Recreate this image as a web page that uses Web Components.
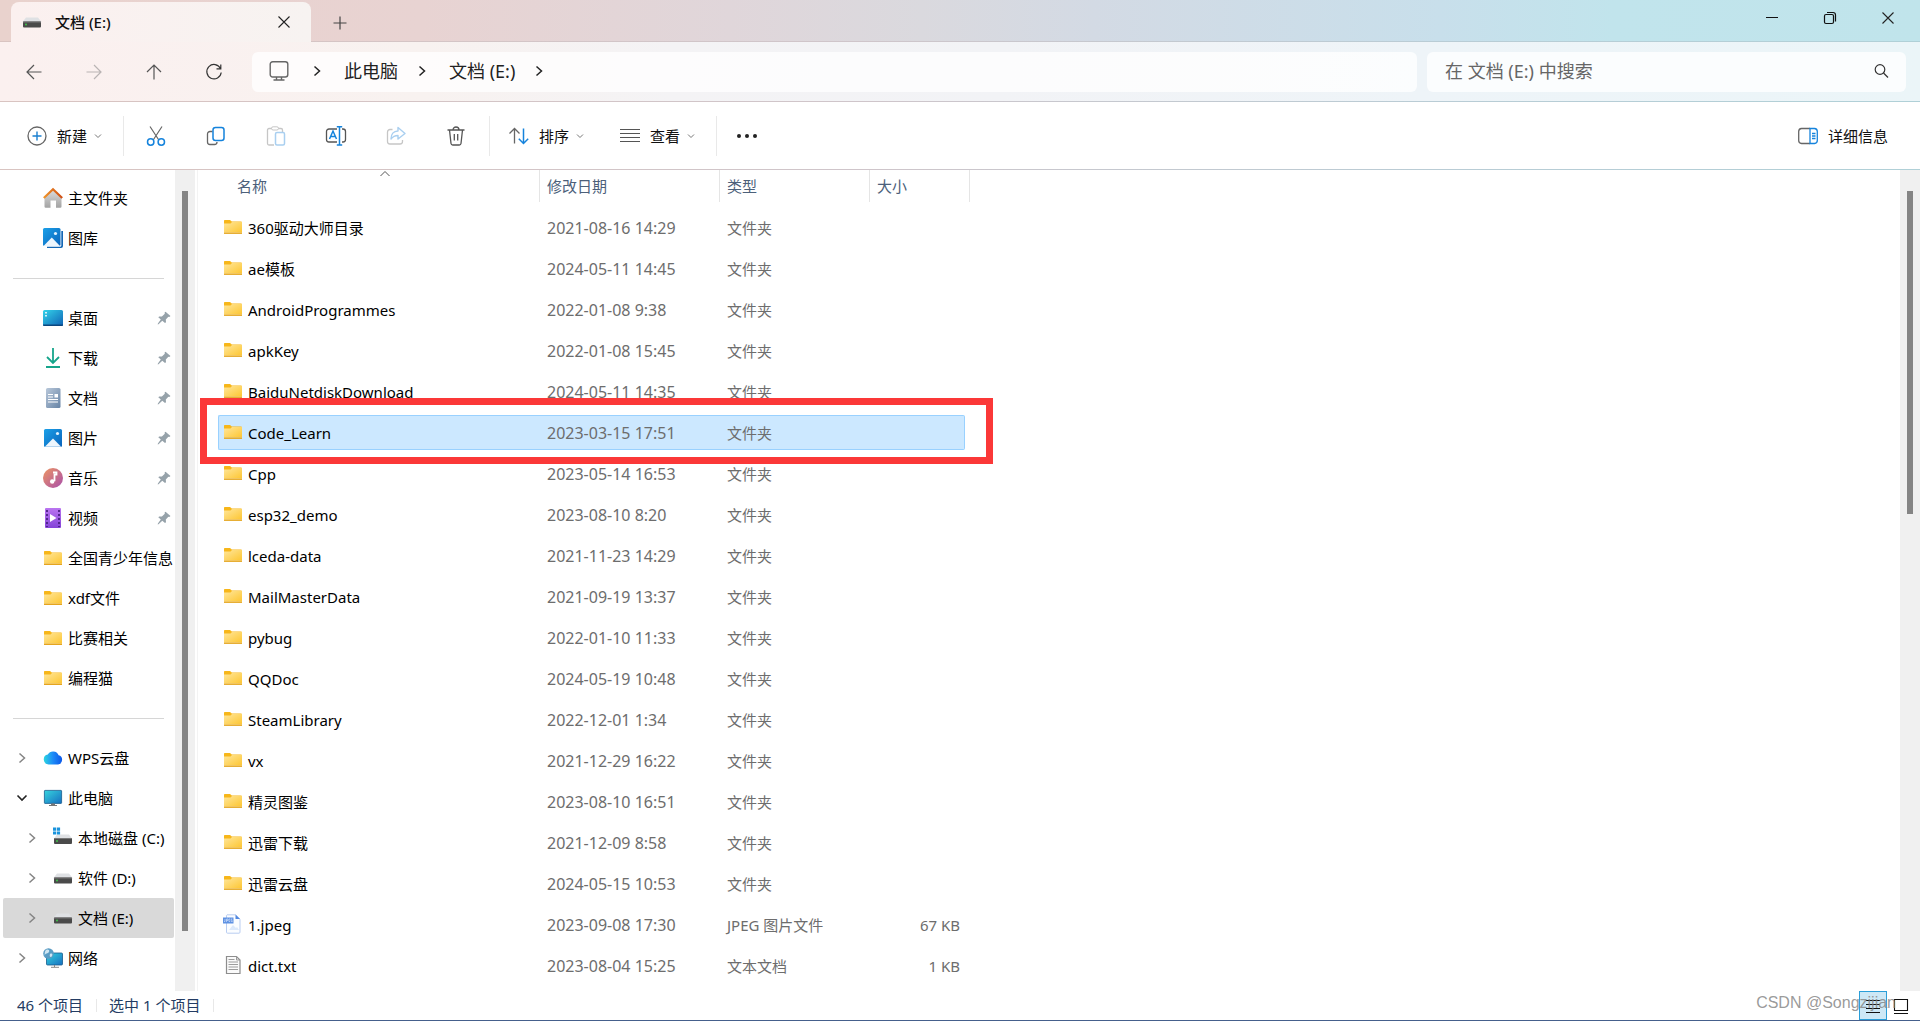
<!DOCTYPE html>
<html lang="zh-CN">
<head>
<meta charset="utf-8">
<title>文档 (E:)</title>
<style>
html,body{height:100%;margin:0}
body{font:15px/20px "Noto Sans","Noto Sans CJK SC",sans-serif;color:#111;background:#fff;overflow:hidden}
</style>
</head>
<body>
<explorer-window></explorer-window>
<script>
const ICONS={
drive:[20,20,'<path d="M4 5.500h12l3.500 4.500H.5z" fill="#dfe1e4"/><rect x="1" y="9.500" width="18" height="6" rx="1" fill="#4a4a4a"/><rect x="1" y="9.500" width="18" height="1" fill="#777"/><circle cx="4" cy="12.500" r=".9" fill="#3fd04a"/>'],
cdrive:[20,20,'<path d="M4 6.500h12l3 4H1z" fill="#dfe1e4"/><rect x="1" y="10" width="18" height="6" rx="1" fill="#4a4a4a"/><rect x="1" y="10" width="18" height="1" fill="#777"/><circle cx="4" cy="13" r=".9" fill="#3fd04a"/><g fill="#1a93dc"><path d="M0-.5h3.200v3.200H0zM3.900-.5h3.200v3.200H3.900zM0 3.400h3.200v3.200H0zM3.900 3.400h3.200v3.200H3.900z"/></g>'],
close:[14,14,'<path d="M1.500 1.500l11 11M12.500 1.500l-11 11" stroke="#222" stroke-width="1.100"/>'],
plus:[14,14,'<path d="M7 .5v13M.5 7h13" stroke="#444" stroke-width="1.200"/>'],
min:[14,14,'<path d="M1 6.500h12" stroke="#111"/>'],
restore:[14,14,'<rect x="1.500" y="3.500" width="9" height="9" rx="1.500"/><path d="M4 1.500h6a2.500 2.500 0 0 1 2.500 2.500v6.500" />','fill="none" stroke="#111" stroke-width="1.200"'],
back:[16,16,'<path d="M15.500 8H1M8 1L1 8l7 7"/>','fill="none" stroke="#555" stroke-width="1.200"'],
fwd:[16,16,'<path d="M.5 8H15M8 1l7 7-7 7"/>','fill="none" stroke="#b9b4b4" stroke-width="1.200"'],
up:[16,16,'<path d="M8 15.500V1M1 8l7-7 7 7"/>','fill="none" stroke="#555" stroke-width="1.200"'],
refresh:[16,16,'<path d="M14.500 4.500A7.200 7.200 0 1 0 15.200 8.500M14.800.5v4.300h-4.300"/>','fill="none" stroke="#333" stroke-width="1.200"'],
monitor:[20,20,'<rect x="1.200" y=".8" width="17.600" height="15.200" rx="2.500"/><path d="M7.500 16v2.800M12.500 16v2.800M4.500 19h11"/>','fill="none" stroke="#666" stroke-width="1.400"'],
chev:[12,12,'<path d="M3.500 1.500L8.500 6l-5 4.500"/>','fill="none" stroke="#222" stroke-width="1.500"'],
tree:[12,12,'<path d="M3.500 1.500L8.500 6l-5 4.500"/>','fill="none" stroke="#858585" stroke-width="1.500"'],
open:[12,12,'<path d="M1.500 3.500L6 8l4.500-4.500"/>','fill="none" stroke="#222" stroke-width="1.600"'],
down:[8,8,'<path d="M1 2.500l3 3 3-3"/>','fill="none" stroke="#777"'],
sort:[12,8,'<path d="M1.500 6L6 1.500 10.500 6"/>','fill="none" stroke="#555"'],
search:[16,16,'<circle cx="7" cy="6.500" r="4.800"/><path d="M10.500 10l4.500 4.500"/>','fill="none" stroke="#333" stroke-width="1.200"'],
new:[20,20,'<circle cx="10" cy="10" r="9" fill="none" stroke="#666" stroke-width="1.300"/><path d="M10 5.500v9M5.500 10h9" stroke="#1a7fd0" stroke-width="1.400"/>'],
cut:[20,20,'<path d="M4 .5l8.800 13.500M16 .5L7.200 14" stroke="#666" stroke-width="1.200"/><g fill="none" stroke="#1583dc" stroke-width="1.500"><circle cx="4.700" cy="16" r="3.200"/><circle cx="15.300" cy="16" r="3.200"/></g>'],
copy:[20,20,'<path d="M6.500 5.500H4a2.500 2.500 0 0 0-2.500 2.500v8A2.500 2.500 0 0 0 4 18.500h4.500a2.500 2.500 0 0 0 2.500-2.500" stroke="#666" stroke-width="1.300"/><rect x="7" y="1.500" width="11" height="13" rx="2.500" stroke="#1583dc" stroke-width="1.500"/>','fill="none"'],
paste:[20,20,'<path d="M5.500 2.500H3A1.500 1.500 0 0 0 1.500 4v13.500A1.500 1.500 0 0 0 3 19h5M12.500 2.500H15A1.500 1.500 0 0 1 16.500 4v2" stroke="#c6c6c6" stroke-width="1.300"/><rect x="5.500" y=".8" width="7" height="3.200" rx="1.600" stroke="#c6c6c6"/><rect x="9.500" y="6.500" width="9" height="12.500" rx="1.500" stroke="#a9cff0" stroke-width="1.500"/>','fill="none"'],
rename:[20,20,'<path d="M11 3H3a2.500 2.500 0 0 0-2.500 2.500v8A2.500 2.500 0 0 0 3 16h8M16 3h1a2.500 2.500 0 0 1 2.500 2.500v8A2.500 2.500 0 0 1 17 16h-1" stroke="#555" stroke-width="1.300"/><path d="M3.500 13L7 5l3.500 8M4.700 10.500h4.600" stroke="#1583dc" stroke-width="1.500"/><path d="M13.500.5v18.500M10.800.7h5.400M10.800 19h5.400" stroke="#1583dc" stroke-width="1.500"/>','fill="none"'],
share:[20,20,'<path d="M6.500 3.500H4A2.500 2.500 0 0 0 1.500 6v9.500A2.500 2.500 0 0 0 4 18h10a2.500 2.500 0 0 0 2.500-2.500V14" stroke="#c6c6c6" stroke-width="1.300"/><path d="M12 1.500l7 6-7 5.500V9.500c-3 0-5 .8-7 3.500 0-4.500 2.500-8 7-8z" stroke="#a9cff0" stroke-width="1.400" stroke-linejoin="round"/>','fill="none"'],
trash:[20,20,'<path d="M1.500 4h17M7 4c0-4 6-4 6 0M3.500 4l1.500 13.500a1.800 1.800 0 0 0 1.800 1.500h6.400a1.800 1.800 0 0 0 1.800-1.500L16.500 4M8.300 8v6.500M11.700 8v6.500" stroke="#555" stroke-width="1.300"/>','fill="none"'],
order:[20,20,'<path d="M5.500 17.500V2.500M.5 7.500l5-5 5 5" stroke="#666" stroke-width="1.300"/><path d="M14.500 2.500v15M9.800 12.800l4.700 4.700 4.700-4.700" stroke="#1583dc" stroke-width="1.500"/>','fill="none"'],
view:[20,20,'<path d="M0 3.500h20M0 7.500h20M0 11.500h20M0 15.500h20" stroke="#555" stroke-width="1.200"/>'],
more:[20,20,'<g fill="#222"><circle cx="2" cy="10" r="2"/><circle cx="10" cy="10" r="2"/><circle cx="18" cy="10" r="2"/></g>'],
details:[20,20,'<path d="M12 2.500H3.500A3 3 0 0 0 .7 5.500v9a3 3 0 0 0 2.800 3H12" stroke="#666" stroke-width="1.300"/><path d="M12 2.500h4.500a3 3 0 0 1 2.800 3v9a3 3 0 0 1-2.800 3H12zM14 7.500h3.500M14 10h3.500M14 12.500h3.500" stroke="#1583dc" stroke-width="1.300"/>','fill="none"'],
home:[20,20,'<defs><linearGradient id="a" x2="0" y2="1"><stop stop-color="#dedede"/><stop offset="1" stop-color="#a3a3a3"/></linearGradient><linearGradient id="b"><stop stop-color="#f0952a"/><stop offset="1" stop-color="#cf4e14"/></linearGradient></defs><path d="M1.500 9L10 1.500 18.500 9v9.500a1.200 1.200 0 0 1-1.200 1.200H13V12.500H7.500v7.200H2.700a1.200 1.200 0 0 1-1.200-1.200z" fill="url(#a)"/><path d="M.8 10L10 1.200 19.200 10" fill="none" stroke="url(#b)" stroke-width="2.200"/>'],
gallery:[20,20,'<defs><linearGradient id="a" x2="1" y2="1"><stop stop-color="#1ba0e8"/><stop offset="1" stop-color="#0a63bb"/></linearGradient></defs><path d="M4 3h16v15a2 2 0 0 1-2 2H4z" fill="#1467b5"/><rect x="0" y="0" width="18.300" height="18.800" rx="1.500" fill="#fff"/><rect width="17.500" height="18" rx="1.500" fill="url(#a)"/><path d="M.5 18L8.800 9.500l8.200 8.500z" fill="#eef6fd"/><circle cx="12.500" cy="5.500" r="1.600" fill="#e3f3ff"/>'],
desktop:[20,20,'<defs><linearGradient id="a" x2="1" y2="1"><stop stop-color="#34d4ea"/><stop offset="1" stop-color="#0f62b5"/></linearGradient></defs><rect y="2" width="20" height="16" rx="1.500" fill="url(#a)"/><path d="M0 16.500h20v.5a1 1 0 0 1-1 1H1a1 1 0 0 1-1-1z" fill="#0c477f"/><path d="M2.200 4h1.600v1.600H2.200zM2.200 7h1.600v1.600H2.200z" fill="#fff"/>'],
download:[20,20,'<path d="M10 0v14.500M4 9l6 6 6-6M3 19h14" fill="none" stroke="#16a58b" stroke-width="1.800"/>'],
doc:[20,20,'<defs><linearGradient id="a" x2="1" y2="1"><stop stop-color="#b9c8da"/><stop offset="1" stop-color="#6683a5"/></linearGradient></defs><rect x="3" width="14.500" height="20" rx="1.500" fill="url(#a)"/><path d="M5 6.500h5M5 9h5M5 11.500h10M5 14h10" stroke="#fff" stroke-width="1.200"/><path d="M11.500 6h3.500v3.500h-3.500z" fill="#fff"/>'],
picture:[20,20,'<defs><linearGradient id="a" x2="1" y2="1"><stop stop-color="#1ba0e8"/><stop offset="1" stop-color="#0a63bb"/></linearGradient></defs><rect x="1" y="1" width="18" height="18" rx="1.500" fill="url(#a)"/><path d="M1.800 18.800L10 10.500l8.200 8.300z" fill="#eef6fd"/><circle cx="14.500" cy="5.500" r="1.600" fill="#e3f3ff"/>'],
music:[20,20,'<defs><linearGradient id="a" x2="1" y2="1"><stop stop-color="#ed9562"/><stop offset="1" stop-color="#a94fab"/></linearGradient></defs><circle cx="10" cy="10" r="10" fill="url(#a)"/><path d="M10 4.500h3.500v2.200h-2v6.500" fill="none" stroke="#fff" stroke-width="1.800"/><circle cx="9.200" cy="13.500" r="2.200" fill="#fff"/>'],
video:[20,20,'<defs><linearGradient id="a" x2="0" y2="1"><stop stop-color="#ba75f0"/><stop offset="1" stop-color="#8444d8"/></linearGradient></defs><rect x="2" width="16" height="20" rx="1" fill="url(#a)"/><path d="M4 2v17M16 2v17" stroke="#4b2284" stroke-width="1.800" stroke-dasharray="2 2"/><path d="M7 6l6.500 4L7 14z" fill="#fff"/>'],
folder:[20,20,'<defs><linearGradient id="a" x2="1" y2="1"><stop stop-color="#ffe69b"/><stop offset="1" stop-color="#fdc632"/></linearGradient></defs><path d="M1 3.500A.8.8 0 0 1 1.800 3H7l1.800 1.500H18a1 1 0 0 1 1 1V8H1z" fill="#f7b619"/><path d="M1 6.500h6.500L9 5h10v10.500H1z" fill="url(#a)"/><path d="M1 16.200h18" stroke="#e5a51e" stroke-width="1.400"/>'],
cloud:[20,20,'<defs><linearGradient id="a"><stop stop-color="#2bd5e0"/><stop offset=".5" stop-color="#1d8bf7"/><stop offset="1" stop-color="#0b57e8"/></linearGradient></defs><path d="M5.500 16.500a5 5 0 0 1-.7-9.900 6 6 0 0 1 10.800.7 4.700 4.700 0 0 1-.5 9.200z" fill="url(#a)"/>'],
pc:[20,20,'<defs><linearGradient id="a" x2="1" y2="1"><stop stop-color="#35d4de"/><stop offset="1" stop-color="#176fc1"/></linearGradient></defs><rect x="1.400" y="2.400" width="17.200" height="13" rx=".6" fill="url(#a)" stroke="#175c8d" stroke-width=".8"/><path d="M8.500 16h3v1.500h-3zM6 17.500h8" fill="#777" stroke="#777"/>'],
network:[20,20,'<defs><linearGradient id="a" x2="1" y2="1"><stop stop-color="#35d4de"/><stop offset="1" stop-color="#176fc1"/></linearGradient></defs><rect x="3.500" y="5" width="16" height="12" rx="1" fill="url(#a)" stroke="#175c8d" stroke-width=".8"/><path d="M11.500 17v2M8 19.300h8" stroke="#888"/><circle cx="5.500" cy="5.500" r="5.300" fill="#5a9cc4"/><path d="M3 2c2-1 4 0 3 2S2 5 2 7 1 4 3 2M7 6c2-1 3 0 2 2s-3 1-2-2" fill="#cfe6f2"/>'],
pin:[14,14,'<path d="M8.500.8l5 4.300-1.200.8-.9-.1L8.800 8.500l.2 2.800-1 .8-2.700-2.300L1.500 13.300l-.8.200.2-.9L3.800 8.500 1.300 6.300l.9-.9 2.700 0L7.800 2.700 7.600 1.600z" fill="#96a2aa"/>'],
jpeg:[20,20,'<path d="M4 .8h8.500L17 5.200v13a1 1 0 0 1-1 1H4.500a1 1 0 0 1-1-1V1.300z" fill="#fbfdff" stroke="#b9cdf1"/><path d="M12.500.5L17 5h-4.500z" fill="#5489e0"/><path d="M6 16l4-5 3 3 1-1 2 3z" fill="#dce9fb"/><rect x="0" y="3.500" width="10.500" height="6" fill="#5f92e3"/><path d="M2 5v2.500h-1M3.500 8V5h1.500v1.500h-1.500M7 5H6v2.500h1M9.300 5H8.200v2.500h1.200v-1" fill="none" stroke="#dbe8fb" stroke-width=".6"/>'],
txt:[20,20,'<path d="M3.500 1.500h10L17 5v13.500H3.500z" fill="#fafafa" stroke="#8d8d8d" stroke-width="1.200"/><path d="M13.500 1.500V5H17" fill="none" stroke="#999"/><path d="M5.500 4.500h6M5.500 7h9.500M5.500 9.500h9.500M5.500 12h9.500M5.500 14.500h9.500" stroke="#9c9c9c" stroke-width="1.100"/>'],
lines:[16,16,'<path d="M1 2.500h14M1 6.500h14M1 10.500h14M1 14.500h14" stroke="#111" stroke-width="1.100"/>'],
thumb:[16,16,'<path d="M1.500 1.500h13v11h-13zM1 15.500h14" fill="none" stroke="#111" stroke-width="1.100"/>']
};
const define=(name,html)=>customElements.define(name,class extends HTMLElement{
  connectedCallback(){
    if(this.shadowRoot)return;
    const t=document.createElement('template');
    t.innerHTML='<style>*{box-sizing:border-box}button,a,input{font:inherit;color:inherit;border:0;background:none;padding:0;margin:0;text-decoration:none;outline:0}</style>'+(typeof html==='function'?html(this):html);
    this.attachShadow({mode:'open'}).append(t.content.cloneNode(true));
  }
});
define('app-icon',el=>{const [w,h,body,attrs='fill="none"']=ICONS[el.getAttribute('name')];
  return `<style>:host{display:block;flex:none;width:${w}px;height:${h}px}svg{display:block;overflow:visible}</style><svg width="${w}" height="${h}" viewBox="0 0 ${w} ${h}" ${attrs} aria-hidden="true">${body}</svg>`});

define('title-bar',`<style>
:host{display:flex;align-items:flex-end;height:42px;padding-left:11px;border-bottom:1px solid;border-image:var(--line) 1}
.tab{display:flex;align-items:center;width:300px;height:40px;margin-bottom:-1px;padding:0 20px 0 11px;border-radius:8px 8px 0 0;background:linear-gradient(90deg,#fbf0ef,#f7f3f1)}
.tab span{flex:1;margin-left:13px;color:#111;font-weight:500}
.add{align-self:center;margin-left:22px;padding-top:4px}
.sys{margin-left:auto;align-self:flex-start;display:flex;padding-right:3px}
.sys button{width:58px;height:36px;display:grid;place-items:center}
</style>
<div class="tab"><app-icon name="drive"></app-icon><span><slot></slot></span><button aria-label="关闭标签页"><app-icon name="close"></app-icon></button></div>
<button class="add" aria-label="新标签页"><app-icon name="plus"></app-icon></button>
<div class="sys"><button aria-label="最小化"><app-icon name="min"></app-icon></button><button aria-label="还原"><app-icon name="restore"></app-icon></button><button aria-label="关闭"><app-icon name="close"></app-icon></button></div>`);

define('address-bar',`<style>
:host{display:flex;align-items:center;height:60px;padding:0 14px 0 4px;background:linear-gradient(90deg,#fbf0ef 0,#f8f2f0 22%,#f4f3f5 35%,#f2f3f6 52%,#eef4f8 74%,#ebf5f8);border-bottom:1px solid;border-image:var(--line) 1}
.nav{display:flex;width:248px}
.nav button{width:60px;height:40px;display:grid;place-items:center}
.path,.find{display:flex;align-items:center;height:40px;padding-bottom:2px;border-radius:6px;background:#ffffffc4;font-size:18px;line-height:24px}
.path{flex:1;padding-left:17px}
.path app-icon[name=monitor]{margin-right:22px}
.path a{margin:0 18px 0 21px;white-space:nowrap;color:#222}
.find{width:479px;margin-left:10px;padding-right:17px;padding-left:18px}
input{flex:1;min-width:0;height:38px}
input::placeholder{color:#666;opacity:1}
</style>
<nav class="nav"><button aria-label="后退"><app-icon name="back"></app-icon></button><button aria-label="前进" disabled><app-icon name="fwd"></app-icon></button><button aria-label="向上"><app-icon name="up"></app-icon></button><button aria-label="刷新"><app-icon name="refresh"></app-icon></button></nav>
<div class="path"><app-icon name="monitor"></app-icon><app-icon name="chev"></app-icon><a href="#pc">此电脑</a><app-icon name="chev"></app-icon><a href="#e">文档 (E:)</a><app-icon name="chev"></app-icon></div>
<label class="find"><input type="search" placeholder="在 文档 (E:) 中搜索" aria-label="搜索"><app-icon name="search"></app-icon></label>`);

define('tool-button',el=>`<style>
:host{display:block}
button{display:flex;align-items:center;justify-content:center;height:40px;min-width:60px;white-space:nowrap}
span{margin-left:10px}
span+app-icon{margin-left:7px}
</style><button aria-label="${el.getAttribute('label')||el.textContent}"><app-icon name="${el.getAttribute('icon')}"></app-icon>${el.textContent?'<span><slot></slot></span>':''}${el.hasAttribute('menu')?'<app-icon name="down"></app-icon>':''}</button>`);

define('tool-bar',`<style>
:host{display:flex;align-items:center;height:68px;padding:0 32px 0 27px;background:#fff;border-bottom:1px solid;border-image:var(--line) 1}
i{width:1px;height:40px;background:#e9e9e9}
.g{display:flex;padding:0 3px 0 2px}
.n{padding-right:21px}.s{display:flex;gap:36px;padding:0 21px 0 19px}.r{margin-left:auto}
</style>
<tool-button class="n" icon="new" menu>新建</tool-button><i></i>
<div class="g"><tool-button icon="cut" label="剪切"></tool-button><tool-button icon="copy" label="复制"></tool-button><tool-button icon="paste" label="粘贴"></tool-button><tool-button icon="rename" label="重命名"></tool-button><tool-button icon="share" label="共享"></tool-button><tool-button icon="trash" label="删除"></tool-button></div><i></i>
<div class="s"><tool-button icon="order" menu>排序</tool-button><tool-button icon="view" menu>查看</tool-button></div><i></i>
<tool-button icon="more" label="更多"></tool-button>
<tool-button class="r" icon="details">详细信息</tool-button>`);

define('side-item',el=>`<style>
:host{display:block}
a{display:flex;align-items:center;height:40px;margin:0 1px 0 3px;padding-left:${el.hasAttribute('child')?23:13}px;color:#000;border-radius:2px;white-space:nowrap;overflow:hidden}
:host([selected]) a{background:#d9d9d9}
.arrow{width:12px;margin-right:15px;flex:none}
span{flex:1;margin-left:5px}
.pin{margin-right:3px}
</style><a href="#"><div class="arrow">${el.hasAttribute('arrow')?`<app-icon name="${el.getAttribute('arrow')}"></app-icon>`:''}</div><app-icon name="${el.getAttribute('icon')}"></app-icon><span><slot></slot></span>${el.hasAttribute('pinned')?'<app-icon class="pin" name="pin"></app-icon>':''}</a>`);

define('scroll-track',el=>`<style>
:host{display:flex;flex-direction:column;width:20px;flex:none;background:#f0f0f0;padding:21px 0 0 7px}
div{width:6px;flex:${el.getAttribute('thumb')} 1 0;background:#858585}
i{flex:${100-el.getAttribute('thumb')} 1 0}
</style><div></div><i></i>`);

define('side-pane',`<style>
:host{display:flex;width:198px;flex:none;padding-right:3px;position:relative}
:host::after{content:"";position:absolute;right:0;top:0;bottom:0;width:1px;background:#f3f3f3}
nav{flex:1;min-width:0;padding-top:8px;overflow:hidden}
hr{border:0;height:1px;background:#d6d6d6;margin:20px 11px 19px 13px}
</style><nav>
<side-item icon="home">主文件夹</side-item><side-item icon="gallery">图库</side-item><hr>
<side-item icon="desktop" pinned>桌面</side-item><side-item icon="download" pinned>下载</side-item><side-item icon="doc" pinned>文档</side-item><side-item icon="picture" pinned>图片</side-item><side-item icon="music" pinned>音乐</side-item><side-item icon="video" pinned>视频</side-item>
<side-item icon="folder">全国青少年信息</side-item><side-item icon="folder">xdf文件</side-item><side-item icon="folder">比赛相关</side-item><side-item icon="folder">编程猫</side-item><hr>
<side-item icon="cloud" arrow="tree">WPS云盘</side-item><side-item icon="pc" arrow="open">此电脑</side-item>
<side-item icon="cdrive" arrow="tree" child>本地磁盘 (C:)</side-item><side-item icon="drive" arrow="tree" child>软件 (D:)</side-item><side-item icon="drive" arrow="tree" child selected>文档 (E:)</side-item>
<side-item icon="network" arrow="tree">网络</side-item>
</nav><scroll-track thumb="92.500"></scroll-track>`);

const FILES=[['360驱动大师目录','2021-08-16 14:29'],['ae模板','2024-05-11 14:45'],['AndroidProgrammes','2022-01-08 9:38'],['apkKey','2022-01-08 15:45'],['BaiduNetdiskDownload','2024-05-11 14:35'],['Code_Learn','2023-03-15 17:51'],['Cpp','2023-05-14 16:53'],['esp32_demo','2023-08-10 8:20'],['lceda-data','2021-11-23 14:29'],['MailMasterData','2021-09-19 13:37'],['pybug','2022-01-10 11:33'],['QQDoc','2024-05-19 10:48'],['SteamLibrary','2022-12-01 1:34'],['vx','2021-12-29 16:22'],['精灵图鉴','2023-08-10 16:51'],['迅雷下载','2021-12-09 8:58'],['迅雷云盘','2024-05-15 10:53'],['1.jpeg','2023-09-08 17:30','JPEG 图片文件','67 KB','jpeg'],['dict.txt','2023-08-04 15:25','文本文档','1 KB','txt']];
define('file-table',`<style>
:host{display:block;flex:1;min-width:0;position:relative;padding-left:20px;overflow:hidden}
table{table-layout:fixed;width:747px;border-collapse:separate;border-spacing:0 6px;margin-top:-6px}
.c1{width:322px}.c2{width:180px}.c3{width:150px}
th{height:34px;padding:0;font-weight:400;text-align:left;color:#4c607a;vertical-align:top;position:relative}
th div{height:32px;padding:6px 0 0 7px;border-right:1px solid #e5e5e5}
th:first-child div{padding-left:19px}
th:last-child div{width:calc(100% + 5px)}
th app-icon{position:absolute;left:50%;top:0}
td{height:35px;padding:0 0 0 7px;border:solid transparent;border-width:1px 0;color:#6d6d6d;white-space:nowrap}
td:first-child{padding-left:4px;border-left-width:1px;color:#000}
td:last-child{padding:0 4px 0 0;border-right-width:1px;text-align:right}
.date{font-size:16px}
.name{display:flex;align-items:center;gap:5px}
.name app-icon{margin-bottom:1px}
.sel td{background:#cce8ff;border-color:#99d1ff}
.sel td:first-child{border-radius:2px 0 0 2px}.sel td:last-child{border-radius:0 2px 2px 0}
.mark{position:absolute;left:2px;top:228px;width:793px;height:66px;border:7px solid #fb3838}
</style><table><colgroup><col class="c1"><col class="c2"><col class="c3"><col></colgroup><thead><tr><th><div>名称</div><app-icon name="sort"></app-icon></th><th><div>修改日期</div></th><th><div>类型</div></th><th><div>大小</div></th></tr></thead><tbody>
${FILES.map(([n,d,t='文件夹',s='',i='folder'])=>`<tr${n==='Code_Learn'?' class="sel"':''}><td><div class="name"><app-icon name="${i}"></app-icon><span>${n}</span></div></td><td class="date">${d}</td><td>${t}</td><td>${s}</td></tr>`).join('')}
</tbody></table><div class="mark"></div>`);

define('status-bar',`<style>
:host{display:flex;align-items:center;height:30px;padding:0 5px 0 17px;color:#243c63;border-bottom:1px solid #45608c;position:relative}
span{padding-bottom:2px}
i{width:1px;height:13px;background:#e8e8e8;margin:0 12px 0 13px}
.views{margin-left:auto;display:flex}
button{width:28px;height:29px;display:grid;place-items:center;border:1px solid transparent}
button.on{background:#cde8f6;border-color:#2b9ed8}
.wm{position:absolute;right:24px;top:2px;font:16px/20px "Liberation Sans",sans-serif;color:#808080cc}
</style><span>46 个项目</span><i></i><span>选中 1 个项目</span><i></i>
<div class="views"><button class="on" aria-label="详细信息视图"><app-icon name="lines"></app-icon></button><button aria-label="缩略图视图"><app-icon name="thumb"></app-icon></button></div><div class="wm">CSDN @Songzijian</div>`);

define('explorer-window',`<style>
:host{--line:linear-gradient(90deg,#d9c4c1,#cfc5ca 45%,#b9ccd5 75%,#b0d0d7);display:flex;flex-direction:column;height:100vh;background:linear-gradient(90deg,#e9d2cd 0,#e8d3d2 22%,#e0d6da 38%,#dad9de 48%,#d3dae4 57%,#c8dfeb 75%,#c1e4ec 84%,#c0e4eb)}
.body{flex:1;min-height:0;display:flex;background:#fff}
status-bar{background:#fff;flex:none}
title-bar,address-bar,tool-bar{flex:none}
</style><title-bar>文档 (E:)</title-bar><address-bar></address-bar><tool-bar></tool-bar>
<div class="body"><side-pane></side-pane><file-table></file-table><scroll-track thumb="40.400"></scroll-track></div>
<status-bar></status-bar>`);
</script>
</body>
</html>
